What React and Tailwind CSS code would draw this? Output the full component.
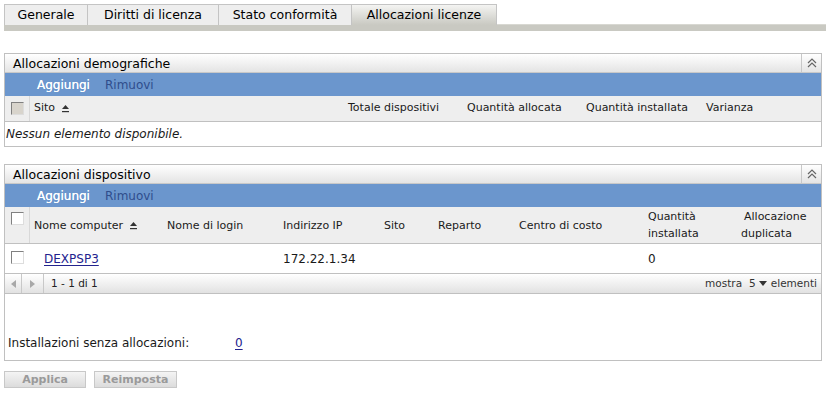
import { Fragment } from "react";

const font = { fontFamily: '"DejaVu Sans", Verdana, sans-serif' };

const tabs = [
  { label: "Generale", w: "w-[84px]" },
  { label: "Diritti di licenza", w: "w-[131px]" },
  { label: "Stato conformità", w: "w-[133px]" },
  { label: "Allocazioni licenze", w: "w-[145px]", active: true },
];

function CollapseIcon() {
  return (
    <svg width="10" height="10" viewBox="0 0 10 10" className="text-[#666]">
      <path d="M1 5 L5 1 L9 5" fill="none" stroke="currentColor" strokeWidth="1.2" />
      <path d="M1 9 L5 5 L9 9" fill="none" stroke="currentColor" strokeWidth="1.2" />
    </svg>
  );
}

function SortIcon() {
  return (
    <svg width="9" height="9" viewBox="0 0 9 9" className="ml-[6px] text-[#333]">
      <path d="M1 5 L4.5 1 L8 5 Z" fill="currentColor" />
      <rect x="1" y="7" width="7" height="1.2" fill="currentColor" />
    </svg>
  );
}

function Checkbox({ shaded }) {
  return (
    <span
      className={
        "block w-[13px] h-[13px] border border-t-[#808080] border-l-[#808080] border-r-[#ddd] border-b-[#ddd] " +
        (shaded ? "bg-[#d8d4cc]" : "bg-white")
      }
    />
  );
}

function PanelHeader({ title }) {
  return (
    <div className="flex h-[19px] bg-gradient-to-b from-white to-[#e4e4e4] border-b border-[#c8c8c8]">
      <div className="flex-1 pl-[8px] text-[12.5px] leading-[19px] text-black">{title}</div>
      <div className="w-[20px] border-l border-[#c8c8c8] flex items-center justify-center">
        <CollapseIcon />
      </div>
    </div>
  );
}

function Toolbar() {
  return (
    <div className="h-[23px] bg-[#6b96cd] flex items-center pl-[32px] gap-[15px] text-[12px]">
      <span className="text-white [text-shadow:0_0_0.4px_#fff]">Aggiungi</span>
      <span className="text-[#2f4d8c]">Rimuovi</span>
    </div>
  );
}

const demoCols = [
  { label: "Sito", w: "w-[314px]", sort: true },
  { label: "Totale dispositivi", w: "w-[119px]" },
  { label: "Quantità allocata", w: "w-[119px]" },
  { label: "Quantità installata", w: "w-[120px]" },
  { label: "Varianza", w: "flex-1" },
];

const devCols = [
  { label: "Nome computer", w: "w-[133px]", sort: true },
  { label: "Nome di login", w: "w-[116px]" },
  { label: "Indirizzo IP", w: "w-[101px]" },
  { label: "Sito", w: "w-[54px]" },
  { label: "Reparto", w: "w-[81px]" },
  { label: "Centro di costo", w: "w-[129px]" },
  { label: ["Quantità", "installata"], w: "w-[93px]" },
  { label: ["Allocazione", "duplicata"], w: "flex-1", indent: true },
];

export default function App() {
  return (
    <div className="w-[826px] h-[405px] bg-white text-[#1a1a1a] overflow-hidden" style={font}>
      {/* tabs */}
      <div className="pt-[4px] pl-[4px]">
        <div className="flex h-[20px]">
          {tabs.map((t, i) => (
            <div
              key={t.label}
              className={
                t.w +
                " h-[21px] border-t border-[#c4c4c4] border-r text-center text-[12.5px] leading-[19px] " +
                (i === 0 ? "border-l " : "") +
                (t.active
                  ? "bg-gradient-to-b from-[#f4f4f2] to-[#c9c9c2] text-black border-r-[#c4c4c4]"
                  : "bg-[#eeeeee] text-black")
              }
            >
              {t.label}
            </div>
          ))}
        </div>
        <div className="h-[7px] bg-[#c9c9c2] border-t border-[#d8d8d2]" />
      </div>

      {/* Allocazioni demografiche */}
      <div className="mt-[22px] ml-[4px] mr-[4px] border border-[#c0c0c0]">
        <PanelHeader title="Allocazioni demografiche" />
        <Toolbar />
        <div className="flex h-[26px] bg-[#eeeeee] border-b border-[#c0c0c0] text-[11px] items-stretch">
          <div className="w-[25px] border-r border-[#d8d8d8] flex items-center justify-center">
            <Checkbox shaded />
          </div>
          {demoCols.map((c) => (
            <div key={c.label} className={c.w + " flex items-center pl-[4px]"}>
              {c.label}
              {c.sort && <SortIcon />}
            </div>
          ))}
        </div>
        <div className="h-[24px] flex items-center pl-[1px] text-[12px] italic">Nessun elemento disponibile.</div>
      </div>

      {/* Allocazioni dispositivo */}
      <div className="mt-[17px] ml-[4px] mr-[4px] border border-[#c0c0c0]">
        <PanelHeader title="Allocazioni dispositivo" />
        <Toolbar />
        <div className="flex h-[37px] bg-[#eeeeee] border-b border-[#c0c0c0] text-[11px] items-stretch">
          <div className="w-[25px] border-r border-[#d8d8d8] flex justify-center pt-[5px]">
            <Checkbox />
          </div>
          {devCols.map((c) => (
            <div key={c.w + String(c.label)} className={c.w + " flex items-center pl-[4px] leading-[17px]"}>
              {Array.isArray(c.label) ? (
                <div>
                  {c.label.map((l, i) => (
                    <div key={l} className={c.indent && i === 0 ? "pl-[3px]" : ""}>
                      {l}
                    </div>
                  ))}
                </div>
              ) : (
                <Fragment>
                  {c.label}
                  {c.sort && <SortIcon />}
                </Fragment>
              )}
            </div>
          ))}
        </div>
        <div className="flex h-[30px] border-b border-[#c0c0c0] text-[12px] items-stretch">
          <div className="w-[25px] flex justify-center pt-[7px]">
            <Checkbox />
          </div>
          <div className="w-[133px] flex items-center pl-[14px]">
            <span className="text-[#23238e] underline underline-offset-2">DEXPSP3</span>
          </div>
          <div className="w-[116px]" />
          <div className="w-[101px] flex items-center pl-[4px]">172.22.1.34</div>
          <div className="w-[54px]" />
          <div className="w-[81px]" />
          <div className="w-[129px]" />
          <div className="w-[93px] flex items-center pl-[4px]">0</div>
        </div>
        <div className="flex h-[20px] bg-gradient-to-b from-white to-[#e2e2e2] border-b border-[#c0c0c0] text-[10.5px] items-stretch">
          <div className="w-[17px] border-r border-[#c8c8c8] flex items-center justify-center">
            <svg width="5" height="8" viewBox="0 0 5 8">
              <path d="M5 0 L0 4 L5 8 Z" fill="#a8a8a8" />
            </svg>
          </div>
          <div className="w-[22px] border-r border-[#c8c8c8] flex items-center justify-center">
            <svg width="5" height="8" viewBox="0 0 5 8">
              <path d="M0 0 L5 4 L0 8 Z" fill="#a8a8a8" />
            </svg>
          </div>
          <div className="flex-1 flex items-center pl-[7px] text-[#222]">1 - 1 di 1</div>
          <div className="flex items-center pr-[4px] text-[#333]">
            mostra
            <span className="ml-[7px]">5</span>
            <svg width="8" height="5" viewBox="0 0 8 5" className="ml-[3px]">
              <path d="M0 0 L8 0 L4 5 Z" fill="#333" />
            </svg>
            <span className="ml-[4px]">elementi</span>
          </div>
        </div>
        <div className="h-[66px] flex items-end pb-[8px] pl-[3px] text-[12px]">
          <span className="w-[227px]">Installazioni senza allocazioni:</span>
          <span className="text-[#23238e] underline underline-offset-2">0</span>
        </div>
      </div>

      {/* buttons */}
      <div className="flex gap-[8px] mt-[10px] ml-[4px]">
        <div className="w-[82px] h-[17px] border border-[#c8c8c8] bg-gradient-to-b from-[#f4f4f4] to-[#dcdcdc] text-center text-[11px] leading-[15px] font-bold text-[#9a9a9a]">
          Applica
        </div>
        <div className="w-[83px] h-[17px] border border-[#c8c8c8] bg-gradient-to-b from-[#f4f4f4] to-[#dcdcdc] text-center text-[11px] leading-[15px] font-bold text-[#9a9a9a]">
          Reimposta
        </div>
      </div>
    </div>
  );
}
